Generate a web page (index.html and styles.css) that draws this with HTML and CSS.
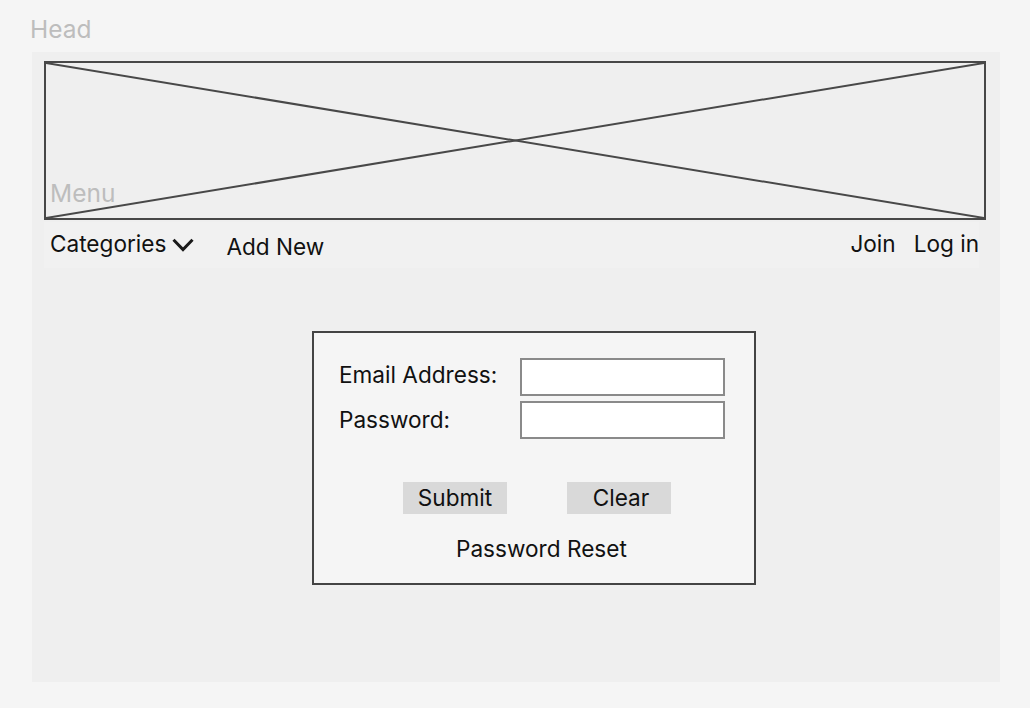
FILE: index.html
```html
<!DOCTYPE html>
<html lang="en">
<head>
<meta charset="utf-8">
<title>Login wireframe</title>
<link rel="stylesheet" href="styles.css">
</head>
<body>
  <div class="head-label">Head</div>
  <div class="page">
    <div class="banner">
      <svg class="banner-x" viewBox="0 0 100 100" preserveAspectRatio="none">
        <line x1="0" y1="0" x2="100" y2="100" vector-effect="non-scaling-stroke"/>
        <line x1="0" y1="100" x2="100" y2="0" vector-effect="non-scaling-stroke"/>
      </svg>
      <span class="menu-label">Menu</span>
    </div>
    <nav class="nav">
      <div class="nav-item categories">Categories
        <svg class="chevron" viewBox="0 0 22 14" width="22" height="14"><polyline points="1.5,1.8 11,11.5 20.5,1.8"/></svg>
      </div>
      <div class="nav-item add-new">Add New</div>
      <div class="nav-right">
        <div class="nav-item">Join</div>
        <div class="nav-item">Log in</div>
      </div>
    </nav>
    <main class="content">
      <form class="login-box">
        <div class="fields">
          <label class="field-label label-email" for="email">Email Address:</label>
          <input class="field-input" id="email" type="text">
          <label class="field-label label-pw" for="pw">Password:</label>
          <input class="field-input" id="pw" type="password">
        </div>
        <div class="buttons">
          <button type="button" class="btn">Submit</button>
          <button type="button" class="btn btn-clear">Clear</button>
        </div>
        <div class="reset">Password Reset</div>
      </form>
    </main>
  </div>
</body>
</html>
```

FILE: styles.css
```css
* { box-sizing: border-box; }

html, body {
  margin: 0;
  padding: 0;
}

body {
  background: #f5f5f5;
  font-family: Inter, "Noto Sans", "Liberation Sans", sans-serif;
  color: #111111;
  width: 1030px;
  height: 708px;
  overflow: hidden;
}

.head-label {
  font-size: 24.5px;
  line-height: 30px;
  color: #bdbdbd;
  padding: 14px 0 0 30px;
  height: 52px;
}

.page {
  margin-left: 32px;
  width: 968px;
  height: 630px;
  background: #efefef;
  padding: 9px 0 0 12px;
}

.banner {
  position: relative;
  width: 942px;
  height: 159px;
  border: 2px solid #484848;
  background: #efefef;
}

.banner-x {
  display: block;
  width: 100%;
  height: 100%;
}

.banner-x line {
  stroke: #484848;
  stroke-width: 2;
}

.menu-label {
  position: absolute;
  left: 4px;
  bottom: 10px;
  font-size: 24.5px;
  line-height: 30px;
  color: #bdbdbd;
}

.nav {
  margin-top: 2px;
  width: 935px;
  height: 46px;
  background: #f1f1f1;
  display: flex;
  align-items: flex-start;
  padding: 8px 0 0 6px;
  font-size: 22.6px;
  line-height: 28px;
}

.nav-item {
  color: #111111;
  white-space: nowrap;
}

.categories {
  display: flex;
  align-items: flex-start;
  gap: 6px;
}

.chevron {
  margin-top: 8px;
}

.chevron polyline {
  fill: none;
  stroke: #1a1a1a;
  stroke-width: 3;
}

.add-new {
  margin-left: 32px;
  margin-top: 3px;
}

.nav-right {
  margin-left: auto;
  display: flex;
  gap: 18px;
}

.content {
  padding: 63px 0 0 268px;
}

.login-box {
  width: 444px;
  border: 2px solid #444444;
  background: #f5f5f5;
  padding: 25px 0 20px 25px;
  margin: 0;
}

.fields {
  display: grid;
  grid-template-columns: 181px 205px;
  row-gap: 5px;
  align-items: start;
}

.field-label {
  font-size: 22.6px;
  line-height: 28px;
  color: #111111;
}

.label-email {
  margin-top: 3px;
}

.label-pw {
  margin-top: 5px;
}

.field-input {
  width: 205px;
  height: 38px;
  border: 2px solid #8a8a8a;
  background: #ffffff;
  margin: 0;
  padding: 0;
  outline: none;
}

.buttons {
  display: flex;
  gap: 60px;
  margin: 43px 0 0 64px;
}

.btn {
  width: 104px;
  height: 32px;
  border: none;
  background: #d9d9d9;
  font-family: inherit;
  font-size: 22.6px;
  line-height: 28px;
  color: #111111;
  padding: 0;
  margin: 0;
}

.btn-clear {
  padding-left: 4px;
}

.reset {
  margin: 21px 0 0 117px;
  font-size: 22.6px;
  line-height: 28px;
  color: #111111;
}
```
